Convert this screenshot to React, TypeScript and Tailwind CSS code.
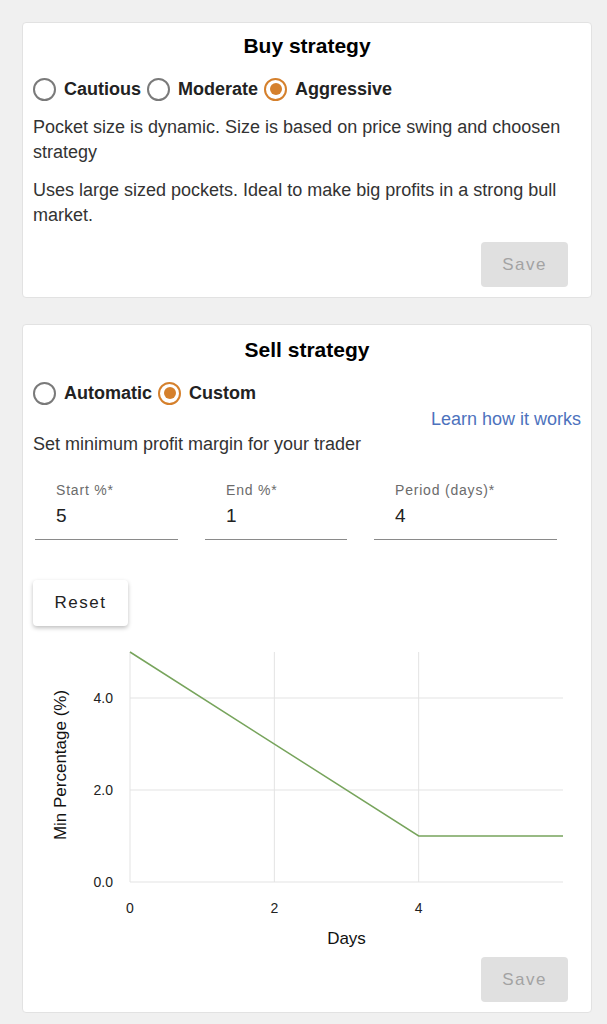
import { useState } from "react";

function Radio({
  label,
  checked,
  onSelect,
}: {
  label: string;
  checked: boolean;
  onSelect: () => void;
}) {
  return (
    <button type="button" onClick={onSelect} className="flex items-center gap-[8px] cursor-pointer">
      <span
        className={
          checked
            ? "w-[23px] h-[23px] rounded-full border-2 border-[#d5802c] flex items-center justify-center"
            : "w-[23px] h-[23px] rounded-full border-2 border-[#7a7a7a]"
        }
      >
        {checked && <span className="w-[12px] h-[12px] rounded-full bg-[#d5802c]" />}
      </span>
      <span className="text-[18px] font-bold text-[#222] leading-6">{label}</span>
    </button>
  );
}

function SaveButton() {
  return (
    <div className="flex justify-end pr-[13px]">
      <button
        disabled
        className="w-[87px] h-[45px] rounded-[4px] bg-[#e0e0e0] text-[#a3a3a3] text-[17px] tracking-[1.5px]"
      >
        Save
      </button>
    </div>
  );
}

function Field({ label, value, width }: { label: string; value: string; width: string }) {
  return (
    <div className={`${width} border-b border-[#8a8a8a] pl-[21px] pb-[11px]`}>
      <div className="text-[14px] leading-4 text-[#6b6b6b] tracking-[0.8px]">{label}</div>
      <div className="mt-[6px] text-[19px] leading-6 text-[#222]">{value}</div>
    </div>
  );
}

// plot box inside the svg
const X0 = 97;
const X1 = 530;
const Y0 = 12;
const Y1 = 242;
const sx = (d: number) => X0 + ((X1 - X0) * d) / 6;
const sy = (p: number) => Y1 - ((Y1 - Y0) * p) / 5;

function MarginChart({ start, end, period }: { start: number; end: number; period: number }) {
  const pts = [
    [0, start],
    [period, end],
    [6, end],
  ];
  return (
    <svg width="548" height="310" className="block" fontFamily="'Liberation Sans', Arial, sans-serif">
      {[2, 4].map((d) => (
        <line key={d} x1={sx(d)} x2={sx(d)} y1={Y0} y2={Y1} stroke="#e3e3e3" strokeWidth="1" />
      ))}
      {[2, 4].map((p) => (
        <line key={p} x1={X0} x2={X1} y1={sy(p)} y2={sy(p)} stroke="#e3e3e3" strokeWidth="1" />
      ))}
      <line x1={X0} x2={X0} y1={Y0} y2={Y1} stroke="#e3e3e3" />
      <line x1={X0} x2={X1} y1={Y1} y2={Y1} stroke="#e3e3e3" />
      <polyline
        points={pts.map(([d, p]) => `${sx(d)},${sy(p)}`).join(" ")}
        fill="none"
        stroke="#77a45c"
        strokeWidth="1.5"
      />
      {[0, 2, 4].map((p) => (
        <text key={p} x={80} y={sy(p) + 5} textAnchor="end" fontSize="14" fill="#222">
          {p.toFixed(1)}
        </text>
      ))}
      {[0, 2, 4].map((d) => (
        <text key={d} x={sx(d)} y={273} textAnchor="middle" fontSize="14" fill="#222">
          {d}
        </text>
      ))}
      <text x={(X0 + X1) / 2} y={304} textAnchor="middle" fontSize="17" fill="#111">
        Days
      </text>
      <text
        x={0}
        y={0}
        transform="translate(33 125) rotate(-90)"
        textAnchor="middle"
        fontSize="17"
        fill="#111"
      >
        Min Percentage (%)
      </text>
    </svg>
  );
}

export default function App() {
  const [buy, setBuy] = useState("Aggressive");
  const [sell, setSell] = useState("Custom");

  return (
    <div className="min-h-screen bg-[#f0f0f0] py-[22px] font-['Liberation_Sans',Arial,sans-serif]">
      {/* Buy strategy */}
      <div className="ml-[22px] w-[570px] bg-white rounded-[4px] border border-[#e2e2e2] px-[10px] pt-[11px] pb-[10px]">
        <h2 className="text-center text-[21px] font-bold leading-6 text-black">Buy strategy</h2>
        <div className="mt-[19px] flex items-center gap-[6px]">
          {["Cautious", "Moderate", "Aggressive"].map((o) => (
            <Radio key={o} label={o} checked={buy === o} onSelect={() => setBuy(o)} />
          ))}
        </div>
        <p className="mt-[14px] text-[18px] leading-[25px] text-[#333]">
          Pocket size is dynamic. Size is based on price swing and choosen strategy
        </p>
        <p className="mt-[13px] text-[18px] leading-[25px] text-[#333]">
          Uses large sized pockets. Ideal to make big profits in a strong bull market.
        </p>
        <div className="mt-[14px]">
          <SaveButton />
        </div>
      </div>

      {/* Sell strategy */}
      <div className="mt-[26px] ml-[22px] w-[570px] bg-white rounded-[4px] border border-[#e2e2e2] px-[10px] pt-[13px] pb-[10px]">
        <h2 className="text-center text-[21px] font-bold leading-6 text-black">Sell strategy</h2>
        <div className="mt-[19px] flex items-center gap-[6px]">
          {["Automatic", "Custom"].map((o) => (
            <Radio key={o} label={o} checked={sell === o} onSelect={() => setSell(o)} />
          ))}
        </div>
        <div className="mt-[2px] text-right text-[18px] leading-[25px] text-[#4d72bd]">
          <a href="#">Learn how it works</a>
        </div>
        <p className="text-[18px] leading-[25px] text-[#333]">Set minimum profit margin for your trader</p>
        <div className="mt-[25px] ml-[2px] flex gap-[27px]">
          <Field label="Start %*" value="5" width="w-[143px]" />
          <Field label="End %*" value="1" width="w-[142px]" />
          <Field label="Period (days)*" value="4" width="w-[183px]" />
        </div>
        <button className="mt-[40px] w-[95px] h-[46px] rounded-[4px] bg-white shadow-[0_2px_4px_rgba(0,0,0,0.25)] text-[17px] tracking-[1.5px] text-[#222]">
          Reset
        </button>
        <div className="mt-[14px]">
          <MarginChart start={5} end={1} period={4} />
        </div>
        <div className="mt-[7px]">
          <SaveButton />
        </div>
      </div>
    </div>
  );
}
